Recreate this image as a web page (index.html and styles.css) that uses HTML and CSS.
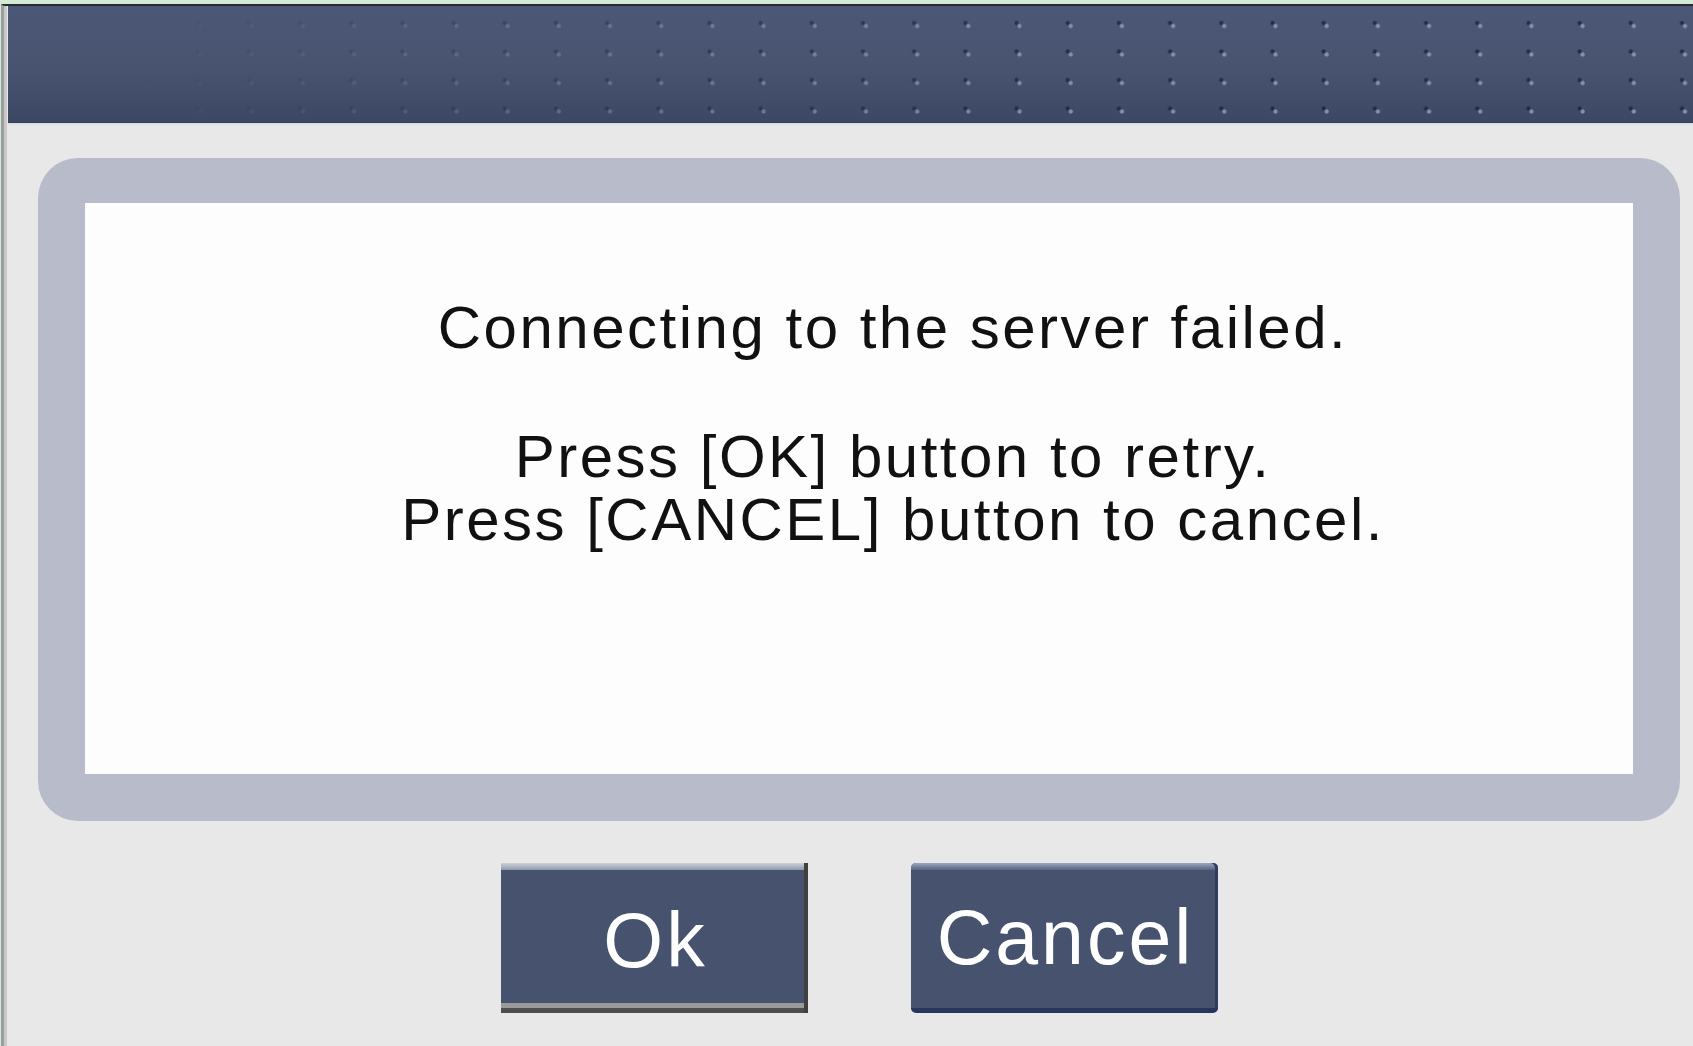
FILE: index.html
```html
<!DOCTYPE html>
<html lang="en">
<head>
<meta charset="utf-8">
<title>Connection error</title>
<link rel="stylesheet" href="styles.css">
</head>
<body>
<div class="screen">
  <div class="window">
    <div class="titlebar"></div>
    <div class="content">
      <div class="frame">
        <div class="message">
          <p class="line-first">Connecting to the server failed.</p>
          <p class="line-rest">Press [OK] button to retry.<br>Press [CANCEL] button to cancel.</p>
        </div>
      </div>
      <div class="actions">
        <button class="btn btn-ok">Ok</button>
        <button class="btn btn-cancel">Cancel</button>
      </div>
    </div>
  </div>
</div>
</body>
</html>
```
FILE: styles.css
```css
html, body {
  margin: 0;
  height: 100%;
}
body {
  background: #d2ead7;
  font-family: "Liberation Sans", Arial, sans-serif;
  overflow: hidden;
}
.screen {
  height: 100vh;
  box-sizing: border-box;
  padding: 4px 0 0 1px;
  display: flex;
  flex-direction: column;
}
.window {
  flex: 1;
  display: flex;
  flex-direction: column;
  background: #e8e8e8;
  border-top: 2px solid #2b2b2b;
  border-left: 3px solid #9c9c9c;
  box-shadow: inset 3px 0 0 #c8c8c8;
}
.titlebar {
  position: relative;
  margin-left: 4px;
  height: 116px;
  border-bottom: 1px solid #323c55;
  box-shadow: 0 2px 0 #dde0ea;
  background: linear-gradient(#4b5776 0%, #48546f 55%, #3c4764 100%);
}
.titlebar::before {
  content: "";
  position: absolute;
  inset: 0;
  background:
    radial-gradient(circle at 39px 20px, rgba(140, 152, 180, 0.9) 0 1.6px, transparent 2.6px),
    radial-gradient(circle at 36px 17px, rgba(28, 36, 62, 0.8) 0 1.6px, transparent 2.6px);
  background-size: 51.2px 28.5px;
  -webkit-mask-image: linear-gradient(to right, transparent 8%, rgba(0,0,0,0.5) 35%, #000 65%);
  mask-image: linear-gradient(to right, transparent 8%, rgba(0,0,0,0.5) 35%, #000 65%);
}
.content {
  flex: 1;
  display: flex;
  flex-direction: column;
  margin: 0 13px 0 34px;
}
.frame {
  margin-top: 35px;
  padding: 45px 47px 47px;
  background: #b8bbc9;
  border-radius: 40px;
}
.message {
  height: 571px;
  box-sizing: border-box;
  background: #fdfdfd;
  padding: 93px 0 0 68px;
  text-align: center;
  color: #111;
  font-size: 60px;
  line-height: 63px;
  letter-spacing: 2.5px;
}
.message p {
  margin: 0;
}
.line-first {
  margin-bottom: 66px !important;
}
.actions {
  display: flex;
  justify-content: center;
  gap: 103px;
  margin-top: 42px;
}
.btn {
  width: 307px;
  height: 150px;
  box-sizing: border-box;
  display: flex;
  align-items: center;
  justify-content: center;
  padding: 4px 0 0 3px;
  border: none;
  color: #ffffff;
  font-family: "Liberation Sans", Arial, sans-serif;
  font-size: 77px;
  letter-spacing: 3px;
  background-color: #46526e;
}
.btn-ok {
  background:
    linear-gradient(#cdd1da, #8f98ac) top / 100% 7px no-repeat,
    linear-gradient(#9a9a9a 0, #9a9a9a 5px, #4e4e4e 5px) bottom / 100% 10px no-repeat,
    #46526e;
  box-shadow: inset -4px 0 0 #404040;
}
.btn-cancel {
  border-radius: 5px;
  border-bottom: 5px solid #27365c;
  background:
    linear-gradient(#9ba6c0, #56627e) top / 100% 7px no-repeat,
    #46526e;
  box-shadow: inset -3px 0 0 #2f3d62;
}
```
